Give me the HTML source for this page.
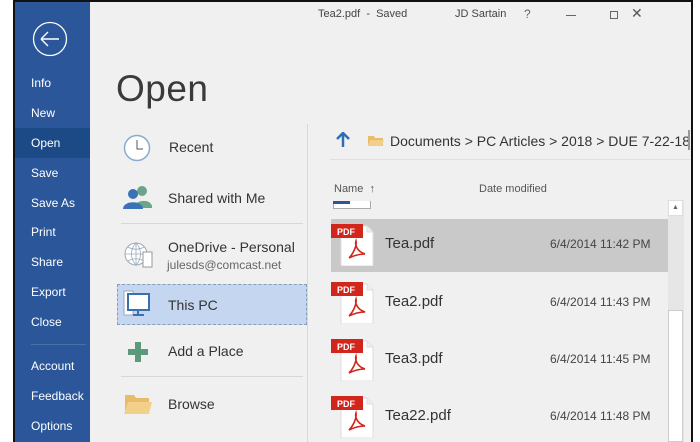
<!DOCTYPE html>
<html><head><style>
*{margin:0;padding:0;box-sizing:border-box}
body{width:700px;height:442px;background:#fff;position:relative;overflow:hidden;font-family:"Liberation Sans",sans-serif}
.abs{position:absolute}
#frame{left:13px;top:0;width:680px;height:442px;border-left:2px solid #111;border-top:2px solid #111;border-right:2px solid #111;background:#f0f0f0}
#side{left:15px;top:2px;width:75px;height:440px;background:#2b579a}
.nav{position:absolute;left:16px;color:#fff;font-size:12px;line-height:14px}
.lt{position:absolute;color:#333;font-size:14px}
.pdf{position:absolute;width:44px;height:42px}
.fn{position:absolute;left:385px;font-size:15px;color:#333}
.dt{position:absolute;left:550px;font-size:12px;color:#444}
</style></head><body>
<div id="frame" class="abs"></div>
<div id="side" class="abs">
 <svg class="abs" style="left:17px;top:19px" width="36" height="36" viewBox="0 0 36 36"><circle cx="18" cy="18" r="16.5" fill="none" stroke="#fff" stroke-width="1.3"/><path d="M9 18H27M9 18L16 11M9 18L16 25" fill="none" stroke="#fff" stroke-width="1.4"/></svg>
 <div class="abs" style="left:0;top:126px;width:75px;height:30px;background:#1c4a87"></div>
 <div class="nav" style="top:74px">Info</div>
 <div class="nav" style="top:104px">New</div>
 <div class="nav" style="top:134px">Open</div>
 <div class="nav" style="top:164px">Save</div>
 <div class="nav" style="top:194px">Save As</div>
 <div class="nav" style="top:223px">Print</div>
 <div class="nav" style="top:253px">Share</div>
 <div class="nav" style="top:283px">Export</div>
 <div class="nav" style="top:313px">Close</div>
 <div class="abs" style="left:16px;top:342px;width:55px;height:1px;background:#4a70ab"></div>
 <div class="nav" style="top:357px">Account</div>
 <div class="nav" style="top:387px">Feedback</div>
 <div class="nav" style="top:417px">Options</div>
</div>
<div class="abs" style="left:318px;top:8px;font-size:11px;color:#444">Tea2.pdf &nbsp;- &nbsp;Saved</div>
<div class="abs" style="left:455px;top:8px;font-size:11px;color:#444">JD Sartain</div>
<div class="abs" style="left:524px;top:7px;font-size:12px;color:#666">?</div>
<div class="abs" style="left:566px;top:15px;width:10px;height:1px;background:#666"></div>
<div class="abs" style="left:610px;top:11px;width:8px;height:8px;border:1px solid #666"></div>
<div class="abs" style="left:631px;top:5px;font-size:14px;color:#555">✕</div>
<div class="abs" style="left:116px;top:68px;font-size:37px;color:#3a3a3a;letter-spacing:0.5px">Open</div>
<!-- left places -->
<svg class="abs" style="left:123px;top:134px" width="28" height="28"><circle cx="14" cy="14" r="12.5" fill="#fff" stroke="#8aaad0" stroke-width="1.5"/><path d="M14 6V15H20" fill="none" stroke="#555" stroke-width="1"/></svg>
<div class="lt" style="left:169px;top:139px">Recent</div>
<svg class="abs" style="left:122px;top:184px" width="32" height="26"><circle cx="20" cy="7" r="5" fill="#6aa58a"/><path d="M12 24C12 16 28 14 30 22V24Z" fill="#6aa58a"/><circle cx="11" cy="10" r="5" fill="#3b72b6"/><path d="M1 25C1 16 21 16 21 25Z" fill="#3b72b6"/></svg>
<div class="lt" style="left:168px;top:190px">Shared with Me</div>
<div class="abs" style="left:121px;top:223px;width:182px;height:1px;background:#d8d8d8"></div>
<svg class="abs" style="left:123px;top:240px" width="32" height="32"><circle cx="13" cy="14" r="11" fill="#fff" stroke="#9aaabb"/><path d="M2 14H24M13 3V25M5 7C10 10 16 10 21 7M5 21C10 18 16 18 21 21M13 3C7 9 7 19 13 25M13 3C19 9 19 19 13 25" fill="none" stroke="#9aaabb" stroke-width="0.8"/><rect x="20" y="12" width="9" height="15" fill="#fff" stroke="#999"/></svg>
<div class="lt" style="left:168px;top:239px">OneDrive - Personal</div>
<div class="abs" style="left:167px;top:258px;font-size:12px;color:#666">julesds@comcast.net</div>
<div class="abs" style="left:117px;top:284px;width:190px;height:41px;background:#c5d7f0;border:1px dashed #8a9bb5"></div>
<svg class="abs" style="left:123px;top:290px" width="30" height="28"><rect x="1" y="1" width="9" height="24" fill="#fff" stroke="#9ab"/><rect x="5" y="4" width="21" height="16" fill="#fff" stroke="#3a6fb0" stroke-width="2"/><path d="M15 21V24M10 25H21" stroke="#3a6fb0" stroke-width="2"/></svg>
<div class="lt" style="left:168px;top:297px">This PC</div>
<svg class="abs" style="left:128px;top:342px" width="20" height="20"><path d="M7 0H13V7H20V13H13V20H7V13H0V7H7Z" fill="#5a9a7a"/></svg>
<div class="lt" style="left:168px;top:343px">Add a Place</div>
<div class="abs" style="left:121px;top:376px;width:182px;height:1px;background:#d8d8d8"></div>
<svg class="abs" style="left:123px;top:393px" width="30" height="22"><path d="M2 2H11L13 5H26V20H2Z" fill="#e6bd6a"/><path d="M5 9H29L26 21H1Z" fill="#f3d08a"/></svg>
<div class="lt" style="left:168px;top:396px">Browse</div>
<div class="abs" style="left:307px;top:124px;width:1px;height:318px;background:#d8d8d8"></div>
<!-- breadcrumb -->
<svg class="abs" style="left:336px;top:132px" width="14" height="16"><path d="M7 1V15M1 7L7 1L13 7" fill="none" stroke="#2e6db4" stroke-width="2.5"/></svg>
<svg class="abs" style="left:368px;top:135px" width="16" height="12"><path d="M0 1H6L7 3H15V11H0Z" fill="#e6bd6a"/><path d="M2 5H16L14 11H0Z" fill="#f3d08a"/></svg>
<div class="abs" style="left:390px;top:133px;font-size:14px;color:#333;white-space:nowrap">Documents &gt; PC Articles &gt; 2018 &gt; DUE 7-22-18</div>
<div class="abs" style="left:688px;top:130px;width:2px;height:20px;background:#999"></div>
<div class="abs" style="left:330px;top:159px;width:360px;height:1px;background:#e0e0e0"></div>
<div class="abs" style="left:334px;top:183px;font-size:11px;color:#555">Name &nbsp;↑</div>
<div class="abs" style="left:479px;top:183px;font-size:11px;color:#555">Date modified</div>
<div class="abs" style="left:333px;top:201px;width:38px;height:8px;border:1px solid #aaa;border-top:none;background:#fff"></div>
<div class="abs" style="left:333px;top:201px;width:17px;height:3px;background:#2b579a"></div>
<!-- scrollbar -->
<div class="abs" style="left:668px;top:200px;width:16px;height:242px;background:#e6e6e6"></div>
<div class="abs" style="left:668px;top:200px;width:15px;height:16px;background:#fff;border:1px solid #ddd;font-size:7px;color:#666;text-align:center;line-height:14px">▲</div>
<div class="abs" style="left:668px;top:310px;width:15px;height:132px;background:#fff;border:1px solid #ccc"></div>
<div class="abs" style="left:331px;top:219px;width:337px;height:53px;background:#c9c9c9"></div>
<!-- rows -->
<svg width="0" height="0" style="position:absolute"><defs><g id="pd"><path d="M10 2H36L42 8V42H10Z" fill="#fff" stroke="#ddd"/><path d="M36 2V8H42" fill="#eee" stroke="#ddd"/><rect x="0" y="0" width="32" height="14" fill="#d2261c"/><text x="6" y="11" font-size="9" font-weight="bold" fill="#fff" font-family="Liberation Sans">PDF</text><path d="M18 34C22 30 26 22 25 17C24 20 25 27 34 30C28 30 22 32 18 34" fill="none" stroke="#d2261c" stroke-width="1.6"/></g></defs></svg>
<svg class="pdf" style="left:331px;top:224px"><use href="#pd"/></svg>
<div class="fn" style="top:235px">Tea.pdf</div><div class="dt" style="top:237px">6/4/2014 11:42 PM</div>
<svg class="pdf" style="left:331px;top:282px"><use href="#pd"/></svg>
<div class="fn" style="top:293px">Tea2.pdf</div><div class="dt" style="top:295px">6/4/2014 11:43 PM</div>
<svg class="pdf" style="left:331px;top:339px"><use href="#pd"/></svg>
<div class="fn" style="top:350px">Tea3.pdf</div><div class="dt" style="top:352px">6/4/2014 11:45 PM</div>
<svg class="pdf" style="left:331px;top:396px"><use href="#pd"/></svg>
<div class="fn" style="top:407px">Tea22.pdf</div><div class="dt" style="top:409px">6/4/2014 11:48 PM</div>
</body></html>
